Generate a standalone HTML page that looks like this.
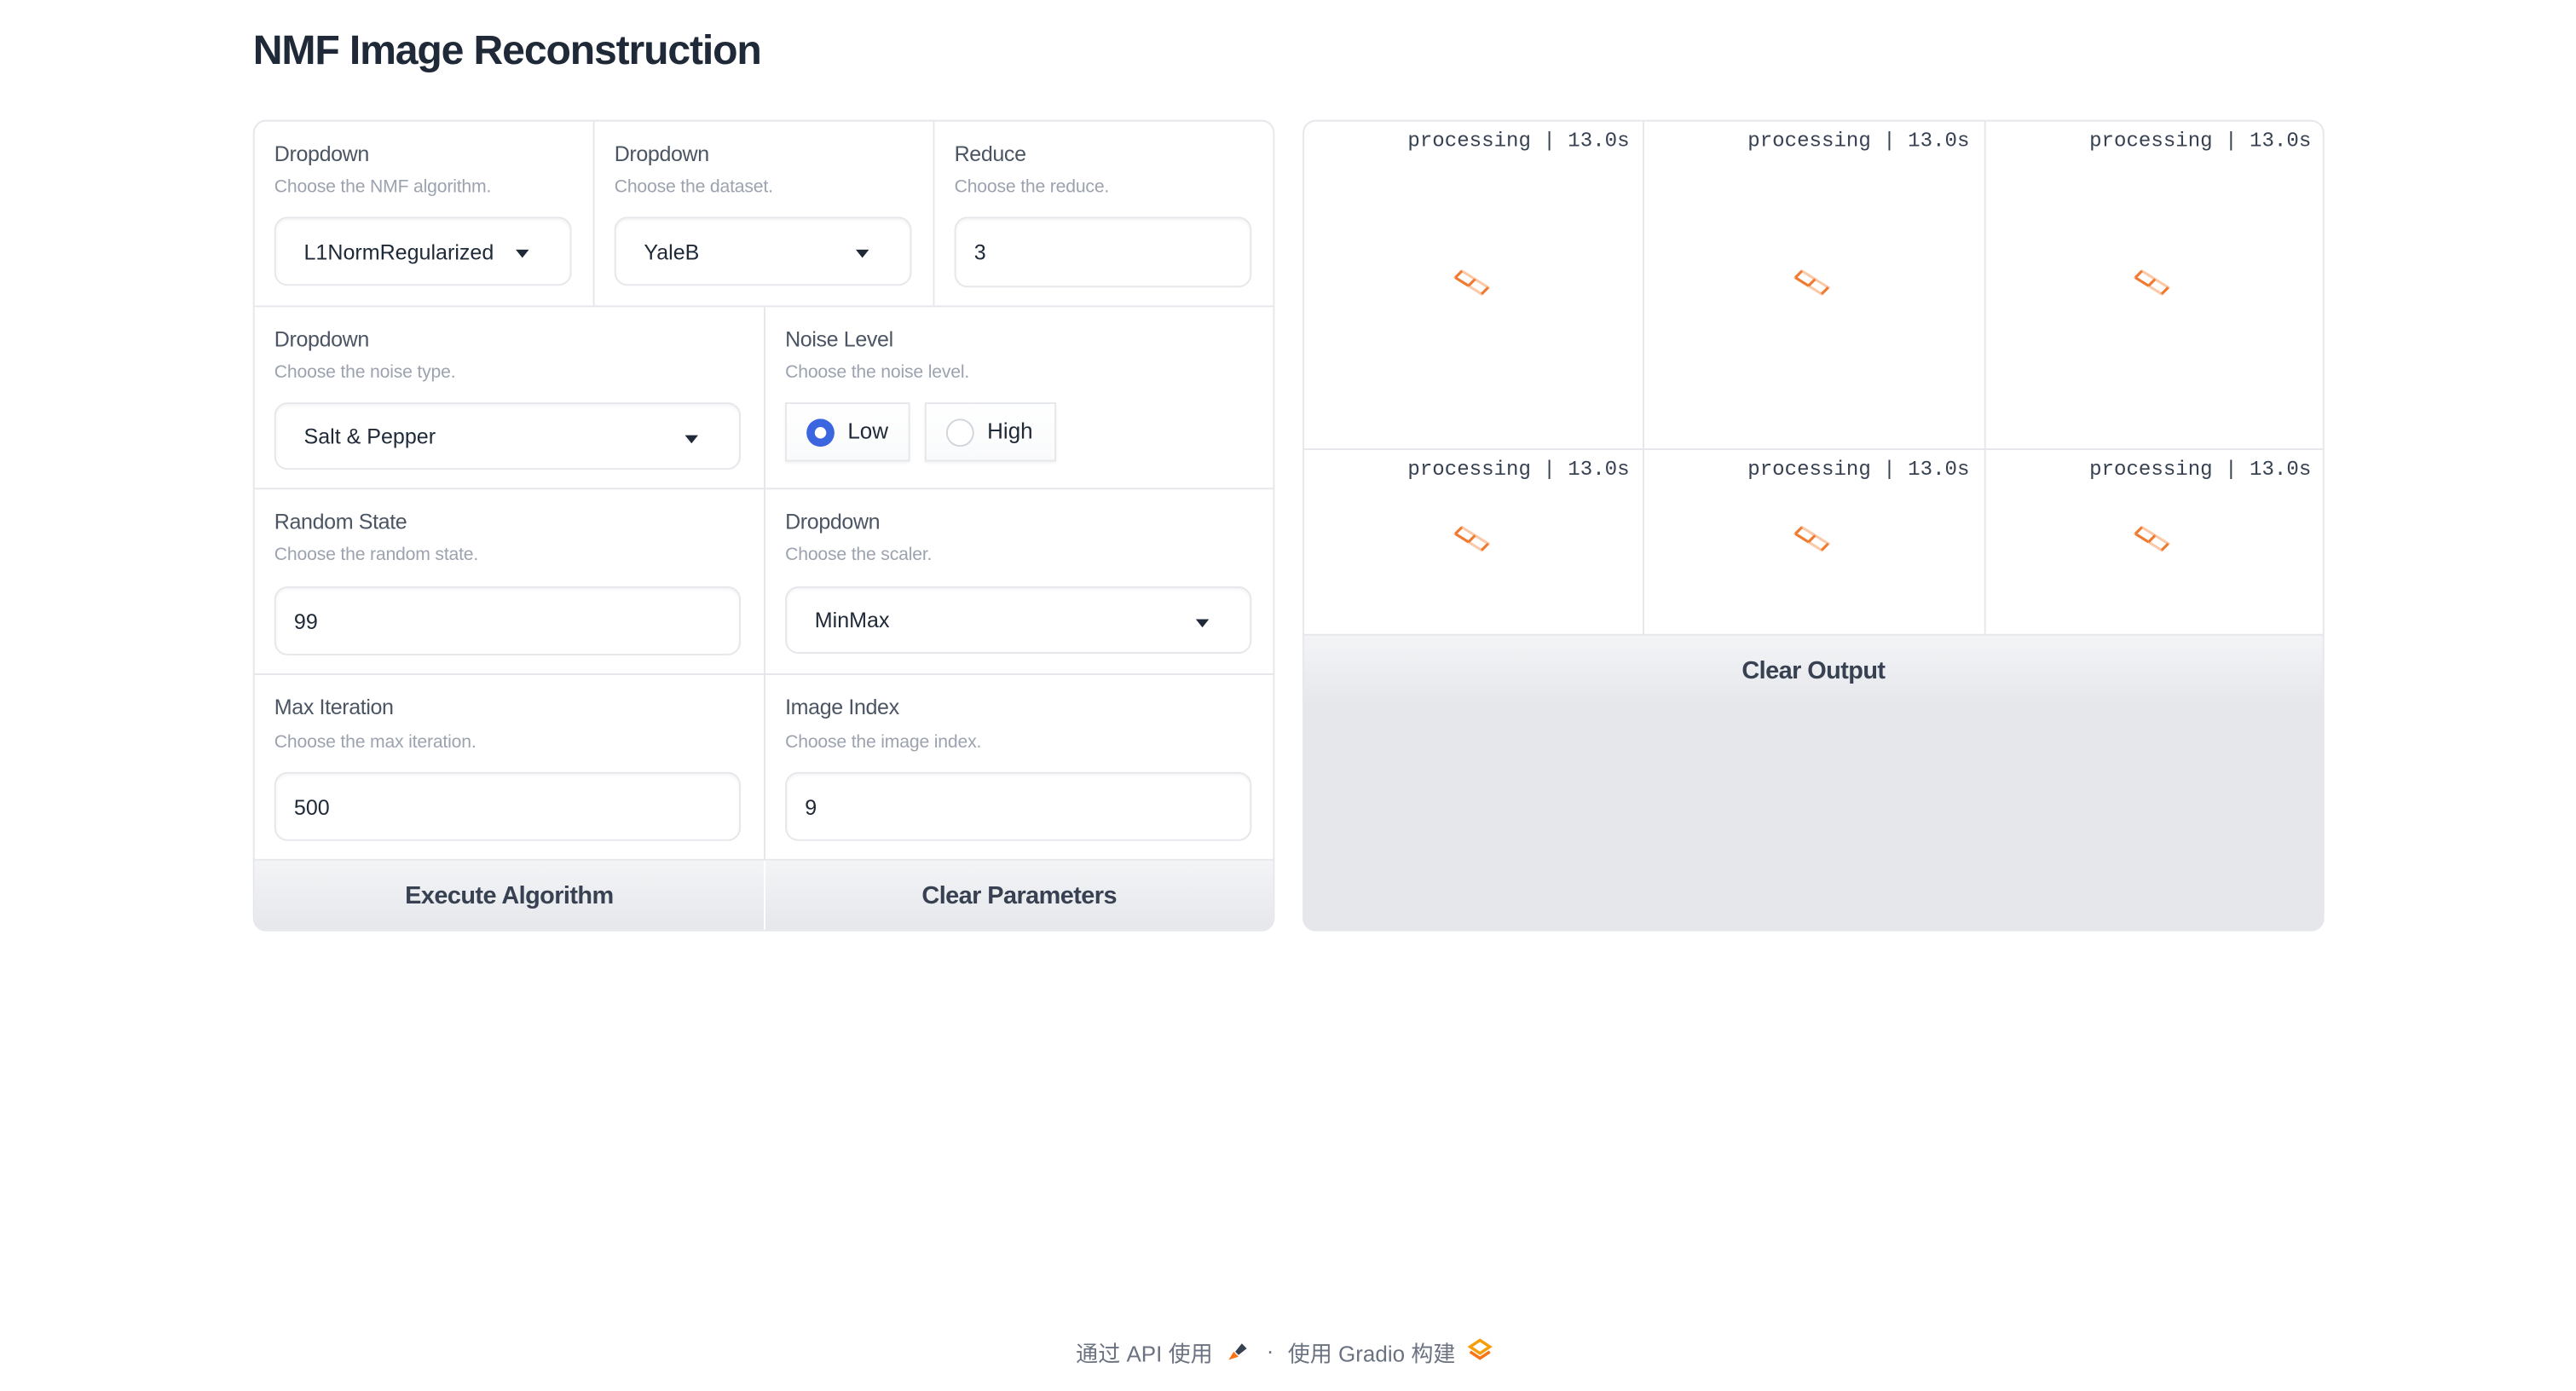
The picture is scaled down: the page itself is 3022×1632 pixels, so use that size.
<!DOCTYPE html>
<html><head><meta charset="utf-8"><style>
html,body{margin:0;padding:0;background:#fff;width:3022px;height:1632px;overflow:hidden}
#w{position:absolute;left:0;top:0;width:1568px;height:847px;transform:scale(1.927);transform-origin:0 0;font-family:"Liberation Sans","Noto Sans CJK SC",sans-serif;color:#1f2937}
.a{position:absolute;box-sizing:border-box}
h1{position:absolute;left:154px;top:17px;margin:0;font-size:25px;font-weight:bold;letter-spacing:-0.6px;color:#1f2937}
.panel{border:1px solid #e5e7eb;border-radius:8px;overflow:hidden;background:#fff}
.lab{font-size:13px;color:#4b5563;letter-spacing:-0.2px}
.inf{font-size:11px;color:#9ca3af;letter-spacing:-0.1px}
.inp{border:1px solid #e5e7eb;border-radius:8px;background:#fff;box-shadow:0 1px 2px rgba(0,0,0,.05) inset;font-size:13px;color:#1f2937;display:flex;align-items:center;padding-left:11px}
.dd{padding-left:17px}
.car{position:absolute;width:0;height:0;border-left:4px solid transparent;border-right:4px solid transparent;border-top:5px solid #1f2937}
.hl{background:#e5e7eb}
.btn{background:linear-gradient(180deg,#f3f4f6,#e5e7eb);font-weight:bold;font-size:15px;color:#374151;display:flex;align-items:center;justify-content:center;letter-spacing:-0.3px}
.pr{font-family:"Liberation Mono",monospace;font-size:12.5px;color:#374151;text-align:right}
</style></head><body><div id="w">
<h1>NMF Image Reconstruction</h1>

<div class="a panel" style="left:154px;top:73px;width:622px;height:494px"></div>
<div class="a hl" style="left:155px;top:186px;width:620px;height:1px"></div>
<div class="a hl" style="left:155px;top:297px;width:620px;height:1px"></div>
<div class="a hl" style="left:155px;top:410px;width:620px;height:1px"></div>
<div class="a hl" style="left:155px;top:523px;width:620px;height:1px"></div>
<div class="a hl" style="left:361px;top:74px;width:1px;height:112px"></div>
<div class="a hl" style="left:568px;top:74px;width:1px;height:112px"></div>
<div class="a hl" style="left:465px;top:187px;width:1px;height:336px"></div>

<div class="a lab" style="left:167px;top:86px">Dropdown</div>
<div class="a inf" style="left:167px;top:108px">Choose the NMF algorithm.</div>
<div class="a inp dd" style="left:167px;top:132px;width:181px;height:42px">L1NormRegularized</div>
<div class="car" style="left:314px;top:152px"></div>
<div class="a lab" style="left:374px;top:86px">Dropdown</div>
<div class="a inf" style="left:374px;top:108px">Choose the dataset.</div>
<div class="a inp dd" style="left:374px;top:132px;width:181px;height:42px">YaleB</div>
<div class="car" style="left:521px;top:152px"></div>
<div class="a lab" style="left:581px;top:86px">Reduce</div>
<div class="a inf" style="left:581px;top:108px">Choose the reduce.</div>
<div class="a inp" style="left:581px;top:132px;width:181px;height:43px">3</div>

<div class="a lab" style="left:167px;top:199px">Dropdown</div>
<div class="a inf" style="left:167px;top:221px">Choose the noise type.</div>
<div class="a inp dd" style="left:167px;top:245px;width:284px;height:41px">Salt &amp; Pepper</div>
<div class="car" style="left:417px;top:265px"></div>
<div class="a lab" style="left:478px;top:199px">Noise Level</div>
<div class="a inf" style="left:478px;top:221px">Choose the noise level.</div>
<div class="a" style="left:478px;top:245px;width:76px;height:36px;border:1px solid #e5e7eb;background:linear-gradient(#fff,#f9fafb);box-shadow:0 1px 2px rgba(0,0,0,.05)"></div>
<div class="a" style="left:491px;top:255px;width:17px;height:17px;border-radius:50%;background:#3b66e0"></div>
<div class="a" style="left:496px;top:260px;width:7px;height:7px;border-radius:50%;background:#fff"></div>
<div class="a" style="left:516px;top:255px;font-size:13.5px">Low</div>
<div class="a" style="left:563px;top:245px;width:80px;height:36px;border:1px solid #e5e7eb;background:linear-gradient(#fff,#f9fafb);box-shadow:0 1px 2px rgba(0,0,0,.05)"></div>
<div class="a" style="left:576px;top:255px;width:17px;height:17px;border-radius:50%;border:1px solid #d1d5db;background:#fff"></div>
<div class="a" style="left:601px;top:255px;font-size:13.5px">High</div>

<div class="a lab" style="left:167px;top:310px">Random State</div>
<div class="a inf" style="left:167px;top:332px">Choose the random state.</div>
<div class="a inp" style="left:167px;top:357px;width:284px;height:42px">99</div>
<div class="a lab" style="left:478px;top:310px">Dropdown</div>
<div class="a inf" style="left:478px;top:332px">Choose the scaler.</div>
<div class="a inp dd" style="left:478px;top:357px;width:284px;height:41px">MinMax</div>
<div class="car" style="left:728px;top:377px"></div>

<div class="a lab" style="left:167px;top:423px">Max Iteration</div>
<div class="a inf" style="left:167px;top:446px">Choose the max iteration.</div>
<div class="a inp" style="left:167px;top:470px;width:284px;height:42px">500</div>
<div class="a lab" style="left:478px;top:423px">Image Index</div>
<div class="a inf" style="left:478px;top:446px">Choose the image index.</div>
<div class="a inp" style="left:478px;top:470px;width:284px;height:42px">9</div>

<div class="a btn" style="left:155px;top:524px;width:310px;height:42px;border-bottom-left-radius:7px">Execute Algorithm</div>
<div class="a btn" style="left:466px;top:524px;width:309px;height:42px;border-bottom-right-radius:7px">Clear Parameters</div>

<div class="a panel" style="left:793px;top:73px;width:622px;height:494px;background:#e5e7eb"></div>
<div class="a" style="left:794px;top:74px;width:620px;height:312px;background:#fff;border-radius:7px 7px 0 0"></div>
<div class="a hl" style="left:794px;top:273px;width:620px;height:1px"></div>
<div class="a hl" style="left:794px;top:386px;width:620px;height:1px"></div>
<div class="a hl" style="left:1000px;top:74px;width:1px;height:312px"></div>
<div class="a hl" style="left:1208px;top:74px;width:1px;height:312px"></div>
<div class="a btn" style="left:794px;top:387px;width:620px;height:42px">Clear Output</div>

<div class="a pr" style="left:794px;top:79px;width:198px">processing | 13.0s</div>
<div class="a pr" style="left:1001px;top:79px;width:198px">processing | 13.0s</div>
<div class="a pr" style="left:1209px;top:79px;width:198px">processing | 13.0s</div>
<div class="a pr" style="left:794px;top:279px;width:198px">processing | 13.0s</div>
<div class="a pr" style="left:1001px;top:279px;width:198px">processing | 13.0s</div>
<div class="a pr" style="left:1209px;top:279px;width:198px">processing | 13.0s</div>

<svg class="a" style="left:0;top:0" width="1568" height="847">
<defs><g id="ld" fill="none" stroke-width="1.6">
<path d="M-11,-4 L-7,-8 L1,-3 L-3,1 Z" stroke="#f9c9a8"/>
<path d="M-3,1 L1,-3 L9,2 L5,6 Z" stroke="#f9c9a8"/>
<path d="M-11,-4 L-7,-8 M-11,-4 L-3,1 M1,-3 L-3,1 M9,2 L5,6" stroke="#f07a30"/>
</g></defs>
<use href="#ld" x="897" y="173"/><use href="#ld" x="1104" y="173"/><use href="#ld" x="1311" y="173"/>
<use href="#ld" x="897" y="329"/><use href="#ld" x="1104" y="329"/><use href="#ld" x="1311" y="329"/>
</svg>

<div class="a" style="left:655px;top:813px;font-size:13.5px;color:#6b7280;white-space:nowrap">通过 API 使用</div>
<svg class="a" style="left:746px;top:814px" width="16" height="16"><path d="M2,14 L5,9 L8,12 Z" fill="#f97316"/><path d="M6,9 L10,4 L13,7 L8,11 Z" fill="#374151"/></svg>
<div class="a" style="left:771px;top:815px;font-size:13.5px;color:#6b7280">·</div>
<div class="a" style="left:784px;top:813px;font-size:13.5px;color:#6b7280;white-space:nowrap">使用 Gradio 构建</div>
<svg class="a" style="left:893px;top:815px" width="16" height="14"><path d="M8,1 L14,5 L8,9 L2,5 Z" fill="none" stroke="#f59e0b" stroke-width="1.8"/><path d="M2,8 L8,12 L14,8" fill="none" stroke="#f97316" stroke-width="1.8"/></svg>
</div></body></html>
